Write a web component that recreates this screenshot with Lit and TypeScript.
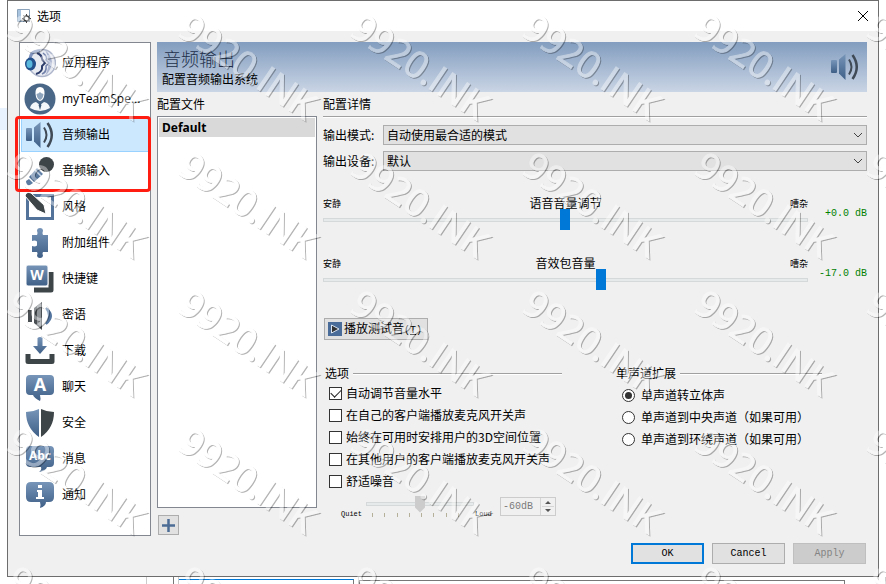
import { LitElement, html, css, svg } from "lit";
import { customElement, state } from "lit/decorators.js";
import { classMap } from "lit/directives/class-map.js";

const speaker = svg`
  <rect x="2" y="9" width="6" height="13" rx="1" fill="url(#b)"/>
  <path d="M10 8.500 16.500 3V29L10 22.500Z" fill="url(#b)"/>
  <path d="M20 8.500Q25 16 20 23.500" fill="none" stroke="#3f4a56" stroke-width="2"/>
  <path d="M23.500 4Q32 16 23.500 28" fill="none" stroke="#3f4a56" stroke-width="2.500"/>`;

const ICONS: Record<string, unknown> = {
  speaker,
  app: svg`
    <circle cx="18" cy="16" r="13.500" fill="#e9ebf2" stroke="#aeb6cc" stroke-width="1.500"/>
    <path d="M21 3Q35 15 21 29Q28 15 21 3" fill="#a9b4d0"/>
    <path d="M13 6Q18 8 18 12L21 16L18 19Q19 25 12 27" fill="none" stroke="#2c3c6b" stroke-width="2"/>
    <path d="M19 6Q24 10 22 13L25 16L22 19Q23 25 18 27" fill="none" stroke="#7484ad" stroke-width="1.500"/>
    <path d="M6 12Q7 3 16 4" fill="none" stroke="#7f93bd" stroke-width="3"/>
    <ellipse cx="6.500" cy="17" rx="5.500" ry="6.500" fill="#24508c"/>
    <ellipse cx="5.500" cy="17" rx="3" ry="4" fill="#59b8dc"/>`,
  user: svg`
    <circle cx="16" cy="16" r="15.500" fill="#4a6788"/>
    <path d="M6 25Q7 20 12 19L16 22L20 19Q25 20 26 25Q16 31 6 25Z" fill="#f4f7fa"/>
    <path d="M11.500 11Q11 4 16 4T20.500 11Q20 17 16 18Q12 17 11.500 11Z" fill="#fff"/>
    <path d="M12.500 11Q15 10.500 16 9Q17 10.500 19.500 11Q19 16 16 17Q13 16 12.500 11Z" fill="#8ea5bd"/>
    <path d="M16 20L14.500 22L16 27L17.500 22Z" fill="#3c5878"/>`,
  mic: svg`
    <circle cx="22.500" cy="9.500" r="7.500" fill="#3e4548"/>
    <path d="M13 13L19 19L10 27L5 22Z" fill="url(#b)"/>
    <path d="M11 15L17 21" stroke="#c9d6e6" stroke-width="1.500"/>
    <path d="M2 26L5 24L9 28L6 30Q2 31 2 26Z" fill="#5c7ca2"/>`,
  pen: svg`
    <rect x="3.500" y="4.500" width="25" height="23" fill="#fff" stroke="#54739a" stroke-width="3"/>
    <path d="M1 5Q2 0 7 2L20 14L22 23L13 19Z" fill="#3e4548" stroke="#fff" stroke-width="1"/>`,
  puzzle: svg`
    <path d="M8 8H13Q14 6 13 4Q13 1 16 1T19 4Q18 6 19 8H24V25H19Q18 27 19 28Q19 31 16 31T13 28Q14 27 13 25H8V19Q11 20 13 18.500V14.500Q11 13 8 14Z" fill="url(#b)"/>`,
  keys: svg`
    <path d="M10 27H27V9" fill="none" stroke="#3e4548" stroke-width="5" stroke-linejoin="round"/>
    <rect x="2" y="2" width="22" height="21" rx="2" fill="url(#b)" stroke="#fff" stroke-width="1"/>
    <text x="13" y="17" text-anchor="middle" class="glyph">W</text>`,
  whisper: svg`
    <path d="M4 11H8V23H4Z M10 9L18 3V31L10 24Z" fill="#4a4f53"/>
    <path d="M13 7L17 4V28L13 25Z" fill="#8f9498"/>
    <path d="M22 9Q28 17 22 25Q32 17 22 9Z" fill="#53759f" stroke="#53759f" stroke-width="2"/>`,
  download: svg`
    <path d="M13.500 3Q16 1 18.500 3V11H23L16 19L9 11H13.500Z" fill="url(#b)"/>
    <path d="M4 19V26.500H28V19" fill="none" stroke="#3e4548" stroke-width="5" stroke-linejoin="round"/>`,
  chat: svg`
    <path d="M6 4H26Q30 4 30 8V20Q30 24 26 24H16Q17 28 16 30Q10 27 9 24H6Q2 24 2 20V8Q2 4 6 4Z" fill="url(#b)"/>
    <text x="16" y="20" text-anchor="middle" class="glyph big">A</text>`,
  shield: svg`
    <path d="M2 5Q9 5 15 2V30Q2 21 2 5Z" fill="url(#b)"/>
    <path d="M17 2Q23 5 30 5Q30 21 17 30Z" fill="#3e4548"/>`,
  abc: svg`
    <path d="M6 3H26Q30 3 30 7V20Q30 24 26 24H23Q22 28 15 29Q18 27 17 24H6Q2 24 2 20V7Q2 3 6 3Z" fill="url(#b)"/>
    <text x="16" y="17" text-anchor="middle" class="glyph small">Abc</text>`,
  info: svg`
    <path d="M7 3H25Q30 3 30 8V18Q30 23 25 23H22Q22 27 16 29Q17 26 16 23H7Q2 23 2 18V8Q2 3 7 3Z" fill="url(#b)"/>
    <path d="M14 6H18V9H14Z M13 11H18V18H20V20H12V18H14V13H13Z" fill="#fff"/>`,
};

const icon = (name: string) => html`<svg class="icon" viewBox="0 0 32 32" aria-hidden="true">
  <defs><linearGradient id="b" x1="0" y1="0" x2="0" y2="1">
    <stop offset="0" stop-color="#7795b8"/><stop offset="1" stop-color="#3f5f87"/>
  </linearGradient></defs>${ICONS[name]}</svg>`;

const PAGES = [
  ["app", "应用程序"], ["user", "myTeamSpe..."], ["speaker", "音频输出"], ["mic", "音频输入"],
  ["pen", "风格"], ["puzzle", "附加组件"], ["keys", "快捷键"], ["whisper", "密语"],
  ["download", "下载"], ["chat", "聊天"], ["shield", "安全"], ["abc", "消息"], ["info", "通知"],
];

const CHECKS = [
  "自动调节音量水平", "在自己的客户端播放麦克风开关声", "始终在可用时安排用户的3D空间位置",
  "在其他用户的客户端播放麦克风开关声", "舒适噪音",
];

const RADIOS = ["单声道转立体声", "单声道到中央声道（如果可用）", "单声道到环绕声道（如果可用）"];

@customElement("app-root")
export class AppRoot extends LitElement {
  @state() private page = 2;

  static styles = css`
    :host {
      display: block; position: relative; overflow: hidden; min-height: 100vh;
      box-sizing: border-box; background: #fff; color: #000;
      font: 12px/16px "Noto Sans CJK SC", sans-serif;
    }
    * { box-sizing: border-box; }
    button, input, select { font: inherit; color: inherit; margin: 0; }
    .desktop { display: grid; grid-template-columns: 7px 1fr 7px; }
    .behind { margin-top: 108px; height: 22px; background: #e8f2fe; }
    .window { border: 1px solid #6d6d6d; background: #f0f0f0; height: calc(100vh - 7px); min-height: 577px; display: flex; flex-direction: column; }
    .titlebar { height: 30px; background: #fff; display: flex; align-items: center; gap: 6px; padding: 0 9px; }
    .titlebar span { flex: 1; }
    .titlebar .logo { width: 14px; height: 14px; }
    .close { border: 0; background: none; padding: 0; width: 12px; height: 12px; display: flex; }
    .body { flex: 1; display: grid; grid-template-columns: 132px minmax(0, 1fr); gap: 6px; padding: 11px 11px 0 11px; align-items: start; }

    .nav { position: relative; border: 1px solid #828790; background: #fff; height: 494px; padding: 1px; font-family: "Open Sans", "Noto Sans CJK SC", sans-serif; }
    .nav button { display: flex; align-items: center; gap: 6px; width: 100%; height: 36px; padding: 1px 2px 0; border: 1px solid transparent; background: none; text-align: left; white-space: nowrap; }
    .nav button.on { background: #cce8ff; border-color: #99d1ff; }
    .nav .icon { width: 32px; height: 32px; flex: none; }
    .mark { position: absolute; left: -5px; top: 73px; width: 136px; height: 76px; border: 3px solid #ff1d12; border-radius: 4px; pointer-events: none; }
    .glyph { font: bold 14px "Open Sans", sans-serif; fill: #fff; }
    .glyph.big { font-size: 18px; }
    .glyph.small { font-size: 12px; }

    .banner { height: 50px; display: flex; align-items: center; justify-content: space-between; padding: 0 6px 0 5px; background: linear-gradient(#829dbf, #cad5e5); }
    .banner h1 { font-size: 18px; line-height: 24px; font-weight: 300; margin: 0 0 0 1px; color: #22304a; }
    .banner p { margin: 0; line-height: 18px; }
    .banner .icon { width: 32px; height: 32px; }
    .columns { display: grid; grid-template-columns: 160px minmax(0, 1fr); gap: 6px; }
    .caption { height: 24px; line-height: 24px; }
    .list { margin: 0; padding: 1px; list-style: none; height: 392px; border: 1px solid #828790; background: #fff; }
    .list li { height: 19px; line-height: 20px; padding: 0 3px; background: #d9d9d9; font-weight: bold; font-size: 12px; font-family: "Noto Sans", sans-serif; }
    .add { display: grid; place-items: center; width: 21px; height: 20px; margin: 7px 0 0 1px; padding: 0; border: 1px solid #adadad; background: #e1e1e1; }

    .detail .caption { border-bottom: 1px solid #a0a0a0; box-shadow: 0 1px #fff; height: 25px; }
    .field { display: grid; grid-template-columns: 60px minmax(0, 1fr); align-items: center; height: 20px; margin-top: 8px; }
    .field + .field { margin-top: 6px; }
    .combo { position: relative; display: flex; }
    .combo select { appearance: none; width: 100%; height: 20px; border: 1px solid #adadad; border-radius: 0; background: #e1e1e1; padding: 0 3px; line-height: 16px; }
    .combo svg { position: absolute; right: 4px; top: 7px; pointer-events: none; }

    .volumes { padding-top: 24px; }
    .volume { display: grid; grid-template-columns: minmax(0, 1fr) 59px; height: 60px; }
    .volume .names { display: grid; grid-template-columns: 1fr auto 1fr; height: 16px; }
    .tiny { font-size: 9px; line-height: 18px; }
    .right { text-align: right; }
    .db { color: #008000; text-align: right; padding-top: 11px; font-family: "Liberation Mono", monospace; font-size: 10px; }
    input[type="range"] { appearance: none; display: block; width: 100%; height: 21px; margin: -2px 0 0; background: none; }
    input[type="range"]::-webkit-slider-runnable-track { height: 4px; border: 1px solid #d6d9d9; background: #e7eaea; }
    input[type="range"]::-webkit-slider-thumb { appearance: none; width: 10px; height: 21px; margin-top: -10px; background: #0078d7; border: 0; border-radius: 0; }
    .test { display: flex; align-items: center; gap: 2px; width: 104px; height: 22px; margin: 3px 0 0 1px; padding: 0 3px; border: 1px solid #adadad; background: #e1e1e1; white-space: nowrap; }
    .latin { font-family: "Liberation Mono", monospace; font-size: 10px; }

    .groups { display: grid; grid-template-columns: 237px 206px; gap: 54px; margin-top: 25px; padding-left: 2px; }
    fieldset { border: 0; margin: 0; padding: 0; min-width: 0; }
    legend { display: flex; align-items: center; gap: 4px; width: 100%; padding: 0; height: 16px; white-space: nowrap; }
    legend::after { content: ""; flex: 1; height: 1px; background: #a0a0a0; box-shadow: 0 1px #fff; }
    .choice { display: flex; align-items: center; gap: 4px; height: 22px; padding-left: 4px; white-space: nowrap; }
    legend + .choice { margin-top: 1px; }
    .radios .choice { padding-left: 6px; gap: 6px; }
    .radios legend + .choice { margin-top: 3px; }
    .choice input { appearance: none; flex: none; width: 13px; height: 13px; border: 1px solid #333; background: #fff; display: grid; place-items: center; }
    .choice input[type="checkbox"]:checked::before { content: ""; width: 9px; height: 5px; border: solid #222; border-width: 0 0 1px 1px; transform: translateY(-1px) rotate(-45deg); }
    .choice input[type="radio"] { border-radius: 50%; }
    .choice input[type="radio"]:checked::before { content: ""; width: 7px; height: 7px; border-radius: 50%; background: #333; }
    .noise { display: grid; grid-template-columns: 24px 108px 24px 56px; gap: 1px; padding-left: 16px; height: 24px; align-items: start; margin-top: 3px; }
    .noise .word { font: 7px/8px "Liberation Mono", monospace; padding-top: 15px; }
    .noise input[type="range"] { height: 17px; margin: 0; }
    .noise input[type="range"]::-webkit-slider-thumb { height: 17px; margin-top: -7px; background: #ccc; clip-path: polygon(0 0, 100% 0, 100% 70%, 50% 100%, 0 70%); }
    .ticks { display: flex; justify-content: space-between; padding: 1px 15px 0 6px; }
    .ticks i { width: 1px; height: 4px; background: #b5b09a; }
    .spin { display: flex; height: 19px; margin: 2px 0 0; border: 1px solid #ccc; color: #7a7a7a; }
    .spin input { appearance: none; flex: 1; min-width: 0; border: 0; background: none; padding: 0 0 0 2px; }
    .spin .arrows { width: 15px; border-left: 1px solid #d5d5d5; }
    .spin .arrows svg { display: block; margin: auto; }

    .footer { display: flex; justify-content: flex-end; gap: 8px; padding: 0 12px 12px 0; font-family: "Liberation Mono", monospace; font-size: 10px; }
    .footer button { width: 73px; height: 21px; border: 1px solid #adadad; background: #e1e1e1; padding: 0; }
    .footer .ok { border: 2px solid #0078d7; }
    .footer button:disabled { background: #ccc; border-color: #bfbfbf; color: #838383; }
    .under { display: grid; grid-template-columns: 147px 27px 5px 175px 5px 1fr 41px; height: 7px; }
    .under i { border-right: 1px solid #ccc; }
    .under .dark { border-right-color: #777; }
    .under .blue { border-top: 1px solid #0078d7; margin-top: 2px; }
    .under .pane { border: 1px solid #777; border-bottom: 0; margin-top: 3px; }
    .watermark { position: absolute; inset: 0; width: 100%; height: 100%; pointer-events: none; }
    .watermark text { font: 37px "Open Sans", sans-serif; fill: #fff; stroke: #fff; stroke-width: 1px; }
  `;

  private volume(id: string, title: string, value: number, db: string) {
    return html`<div class="volume">
      <div>
        <div class="names"><span class="tiny">安静</span><label for=${id}>${title}</label><span class="tiny right">嘈杂</span></div>
        <input id=${id} type="range" min="0" max="1000" .value=${String(value)} />
      </div>
      <output class="db" for=${id}>${db}</output>
    </div>`;
  }

  private combo(id: string, label: string, value: string) {
    return html`<div class="field">
      <label for=${id}>${label}:</label>
      <div class="combo">
        <select id=${id}><option>${value}</option></select>
        <svg width="10" height="7" viewBox="0 0 10 7" aria-hidden="true"><path d="M1 1L5 5L9 1" fill="none" stroke="#444" /></svg>
      </div>
    </div>`;
  }

  render() {
    return html`
      <div class="desktop">
        <div class="behind"></div>
        <main class="window">
          <header class="titlebar">
            <svg class="logo" viewBox="0 0 14 14" aria-hidden="true">
              <path d="M.5 .5H12.500V12.500H.5Z" fill="#fff" stroke="#8ba3bb"/><path d="M1 1H4V12H1Z" fill="#a9c4de"/>
              <circle cx="9.500" cy="9.500" r="2.500" fill="#fff" stroke="#444" stroke-width="1.500"/>
              <path d="M9.500 5V7M9.500 12V14M5 9.500H7M12 9.500H14M6.500 6.500L8 8M11 11L12.500 12.500M12.500 6.500L11 8M8 11L6.500 12.500" stroke="#444"/>
            </svg>
            <span>选项</span>
            <button class="close" aria-label="Close"><svg width="12" height="12" viewBox="0 0 12 12"><path d="M1 1L11 11M11 1L1 11" stroke="#000"/></svg></button>
          </header>
          <div class="body">
            <nav class="nav">
              ${PAGES.map(([name, label], i) => html`<button class=${classMap({ on: i === this.page })} @click=${() => (this.page = i)}>${icon(name)}${label}</button>`)}
              <div class="mark"></div>
            </nav>
            <section>
              <div class="banner"><div><h1>音频输出</h1><p>配置音频输出系统</p></div>${icon("speaker")}</div>
              <div class="columns">
                <div>
                  <div class="caption">配置文件</div>
                  <ul class="list"><li>Default</li></ul>
                  <button class="add" aria-label="Add"><svg width="15" height="15" viewBox="0 0 15 15"><path d="M7.500 1V14M1 7.500H14" stroke="#4c6c96" stroke-width="2.500"/></svg></button>
                </div>
                <div class="detail">
                  <div class="caption">配置详情</div>
                  ${this.combo("mode", "输出模式", "自动使用最合适的模式")}
                  ${this.combo("device", "输出设备", "默认")}
                  <div class="volumes">
                    ${this.volume("voice", "语音音量调节", 499, "+0.0 dB")}
                    ${this.volume("pack", "音效包音量", 575, "-17.0 dB")}
                  </div>
                  <button class="test">
                    <svg width="14" height="14" viewBox="0 0 14 14" aria-hidden="true"><rect width="14" height="14" fill="#4a6c98"/><path d="M3.500 3L11 7L3.500 11Z" fill="#333" stroke="#dce6f2"/></svg>
                    <span>播放测试音<span class="latin">(<u>T</u>)</span></span>
                  </button>
                  <div class="groups">
                    <fieldset>
                      <legend>选项</legend>
                      ${CHECKS.map((text, i) => html`<label class="choice"><input type="checkbox" ?checked=${i === 0} /><span>${text}</span></label>`)}
                      <div class="noise">
                        <span class="word">Quiet</span>
                        <div>
                          <input type="range" aria-label="舒适噪音" disabled value="50" />
                          <div class="ticks">${Array.from({ length: 8 }, () => html`<i></i>`)}</div>
                        </div>
                        <span class="word">Loud</span>
                        <div class="spin latin">
                          <input type="text" aria-label="dB" value="-60dB" disabled />
                          <span class="arrows"><svg width="12" height="17" viewBox="0 0 12 17"><path d="M3 6L6 3L9 6Z M3 11L6 14L9 11Z" fill="#555"/><path d="M0 8.500H12" stroke="#d5d5d5"/></svg></span>
                        </div>
                      </div>
                    </fieldset>
                    <fieldset class="radios">
                      <legend>单声道扩展</legend>
                      ${RADIOS.map((text, i) => html`<label class="choice"><input type="radio" name="mono" ?checked=${i === 0} /><span>${text}</span></label>`)}
                    </fieldset>
                  </div>
                </div>
              </div>
            </section>
          </div>
          <footer class="footer"><button class="ok">OK</button><button>Cancel</button><button disabled>Apply</button></footer>
        </main>
      </div>
      <div class="under"><i></i><i class="dark"></i><i></i><i class="blue dark"></i><i></i><i class="pane"></i><i></i></div>
      <svg class="watermark" aria-hidden="true">
        <defs>
          <filter id="emboss" x="-10%" y="-10%" width="120%" height="120%" color-interpolation-filters="sRGB">
            <feOffset in="SourceAlpha" dx="1" dy="1" result="shift"/>
            <feGaussianBlur in="shift" stdDeviation="0.6" result="soft"/>
            <feComposite in="soft" in2="SourceAlpha" operator="out" result="edge"/>
            <feComponentTransfer in="edge" result="shade"><feFuncA type="linear" slope="0.3"/></feComponentTransfer>
            <feComponentTransfer in="SourceGraphic" result="face"><feFuncA type="linear" slope="0.4"/></feComponentTransfer>
            <feMerge><feMergeNode in="shade"/><feMergeNode in="face"/></feMerge>
          </filter>
        </defs>
        <g filter="url(#emboss)">
          ${[0, 1, 2, 3, 4].map((r) => [0, 1, 2, 3, 4, 5].map((c) => {
            const x = 4 + c * 172, y = 34 + r * 138;
            return svg`<text x=${x} y=${y} transform="rotate(34 ${x} ${y})">9920.INK</text>`;
          }))}
        </g>
      </svg>`;
  }
}
